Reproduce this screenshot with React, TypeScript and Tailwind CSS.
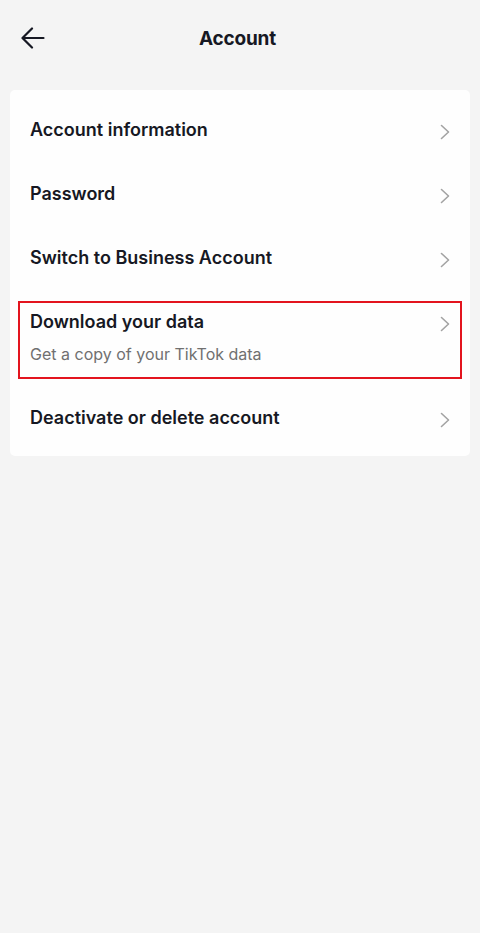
type Row = { id: string; title: string; subtitle?: string; highlighted?: boolean };

const rows: Row[] = [
  { id: "info", title: "Account information" },
  { id: "password", title: "Password" },
  { id: "business", title: "Switch to Business Account" },
  { id: "download", title: "Download your data", subtitle: "Get a copy of your TikTok data", highlighted: true },
  { id: "deactivate", title: "Deactivate or delete account" },
];

function BackArrow() {
  return (
    <svg width="24" height="22" viewBox="0 0 24 22" fill="none" stroke="#161823" strokeWidth="2.2" strokeLinecap="round" strokeLinejoin="round">
      <path d="M22.5 11H2" />
      <path d="M11 1.5L1.5 11L11 20.5" />
    </svg>
  );
}

function Chevron() {
  return (
    <svg width="10" height="16" viewBox="0 0 10 16" fill="none" stroke="#a3a3a3" strokeWidth="1.6" strokeLinecap="round" strokeLinejoin="round">
      <path d="M1.5 1.5L8.5 8L1.5 14.5" />
    </svg>
  );
}

export default function App() {
  return (
    <div className="min-h-[933px] bg-[#f4f4f4] font-['Inter',sans-serif] text-[#161823]">
      <header className="relative flex h-[76px] items-center justify-center pr-[5px] pt-[2px]">
        <button type="button" className="absolute left-[21px] top-[27px]">
          <BackArrow />
        </button>
        <div className="text-[19px] font-bold tracking-[-0.2px]">Account</div>
      </header>

      <div className="mx-[10px] mt-[14px] rounded-[5px] bg-[#fefefe] py-[7px]">
        {rows.map((row) => (
          <div key={row.id} className="relative">
            {row.highlighted ? (
              <div className="pointer-events-none absolute bottom-[6px] left-[8px] right-[8px] top-[12px] border-2 border-[#e3141e]" />
            ) : null}
            <div className="flex h-[64px] items-center justify-between pl-[20px] pr-[20px]">
              <div className="text-[18px] font-semibold">{row.title}</div>
              <div className="mt-[6px]">
                <Chevron />
              </div>
            </div>
            {row.subtitle ? (
              <div className="-mt-[11px] h-[43px] pl-[20px] text-[16px] text-[#707070]">{row.subtitle}</div>
            ) : null}
          </div>
        ))}
      </div>
    </div>
  );
}
